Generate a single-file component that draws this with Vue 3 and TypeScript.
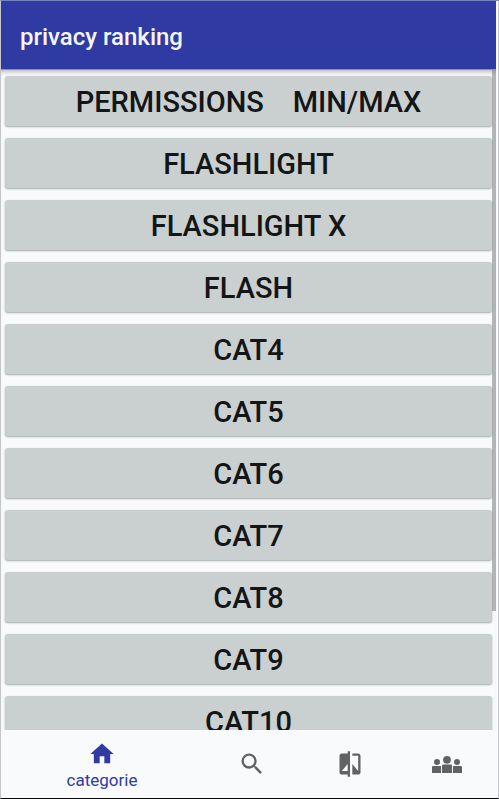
<script setup lang="ts">
import { ref } from 'vue'

type Tab = 'categorie' | 'search' | 'compare' | 'community'

const categories: string[] = [
  'permissions    min/max',
  'flashlight',
  'flashlight x',
  'flash',
  'cat4',
  'cat5',
  'cat6',
  'cat7',
  'cat8',
  'cat9',
  'cat10',
]

const tabs: Tab[] = ['categorie', 'search', 'compare', 'community']
const active = ref<Tab>('categorie')
</script>

<template>
  <div class="screen">
    <header class="app-bar">
      <h1>privacy ranking</h1>
    </header>

    <main class="content">
      <div class="list">
        <button v-for="name in categories" :key="name" type="button" class="category">{{ name }}</button>
      </div>
      <div class="thumb"></div>
    </main>

    <nav class="bottom-nav">
      <button
        v-for="tab in tabs"
        :key="tab"
        type="button"
        class="tab"
        :class="{ active: tab === active }"
        :aria-label="tab"
        @click="active = tab"
      >
        <svg v-if="tab === 'categorie'" class="icon" viewBox="0 0 24 24" aria-hidden="true">
          <path d="M10 20v-6h4v6h5v-8h3L12 3 2 12h3v8z" />
        </svg>
        <svg v-else-if="tab === 'search'" class="icon" viewBox="0 0 24 24" aria-hidden="true">
          <path d="M15.5 14h-.79l-.28-.27A6.471 6.471 0 0 0 16 9.5 6.5 6.5 0 1 0 9.5 16c1.61 0 3.09-.59 4.23-1.57l.27.28v.79l5 4.99L20.49 19l-4.99-5zm-6 0C7.01 14 5 11.99 5 9.5S7.01 5 9.5 5 14 7.01 14 9.5 11.99 14 9.5 14z" />
        </svg>
        <svg v-else-if="tab === 'compare'" class="icon" viewBox="0 0 24 24" aria-hidden="true">
          <path d="M10 3H5c-1.100 0-2 .9-2 2v14c0 1.100.9 2 2 2h5v2h2V1h-2v2zm0 15H5l5-6v6zm9-15h-5v2h5v13l-5-6v9h5c1.100 0 2-.9 2-2V5c0-1.100-.9-2-2-2z" />
        </svg>
        <svg v-else class="icon wide" viewBox="0 0 30 18" aria-hidden="true">
          <circle cx="15" cy="4.800" r="3.900" />
          <circle cx="5" cy="7" r="3" />
          <circle cx="25" cy="7" r="3" />
          <path d="M10 18v-7.500q0-1 1-1h8q1 0 1 1V18z" />
          <path d="M0 18v-6q0-1 1-1h8V18zM21 18v-7h8q1 0 1 1v6z" />
        </svg>
        <span v-if="tab === active" class="label">{{ tab }}</span>
      </button>
    </nav>
  </div>
</template>

<style>
body {
  margin: 0;
  background: #f8fafb;
}
</style>

<style scoped>
.screen {
  box-sizing: border-box;
  display: flex;
  flex-direction: column;
  height: 100vh;
  padding-right: 2px;
  border: 1px solid #c4c6cc;
  border-top-color: #7482bd;
  border-bottom-color: #08080a;
  background: #f8fafb;
  font-family: Roboto, sans-serif;
}

.app-bar {
  display: flex;
  align-items: center;
  flex: none;
  height: 68px;
  padding: 0 19px;
  background: #2f3aa3;
  border-bottom: 1px solid #8d90b0;
  color: #f5f6fb;
}

h1 {
  margin: 0;
  padding-top: 4px;
  font-size: 24px;
  font-weight: 500;
  line-height: 32px;
}

.content {
  position: relative;
  flex: 1;
  min-height: 0;
}

.list {
  box-sizing: border-box;
  display: flex;
  flex-direction: column;
  gap: 12px;
  height: 100%;
  padding: 6px 4px;
  overflow-y: auto;
  scrollbar-width: none;
  box-shadow: inset 0 5px 4px -3px #b9bbc0;
}

.category {
  flex: none;
  height: 50px;
  padding: 2px 0 0;
  border: 0;
  border-radius: 3px;
  background: #cacfcf;
  box-shadow: 0 1px 2px #a2a6a6;
  color: #121617;
  font-family: inherit;
  font-size: 29px;
  font-weight: 500;
  line-height: 48px;
  text-transform: uppercase;
  white-space: pre;
}

.thumb {
  position: absolute;
  top: 0;
  right: 0;
  width: 4px;
  height: 82%;
  background: rgba(110, 112, 116, 0.5);
}

.bottom-nav {
  display: flex;
  flex: none;
  height: 68px;
  background: #f8fafb;
}

.tab {
  display: flex;
  flex: 1;
  flex-direction: column;
  align-items: center;
  justify-content: center;
  padding: 0;
  border: 0;
  background: none;
  color: #616263;
  font-family: inherit;
}

.tab.active {
  flex: 0 0 202px;
  padding-top: 4px;
  color: #2f3aa3;
}

.icon {
  width: 28px;
  height: 28px;
  fill: currentColor;
}

.icon.wide {
  width: 30px;
  height: 18px;
}

.label {
  font-size: 17px;
  line-height: 24px;
}
</style>
